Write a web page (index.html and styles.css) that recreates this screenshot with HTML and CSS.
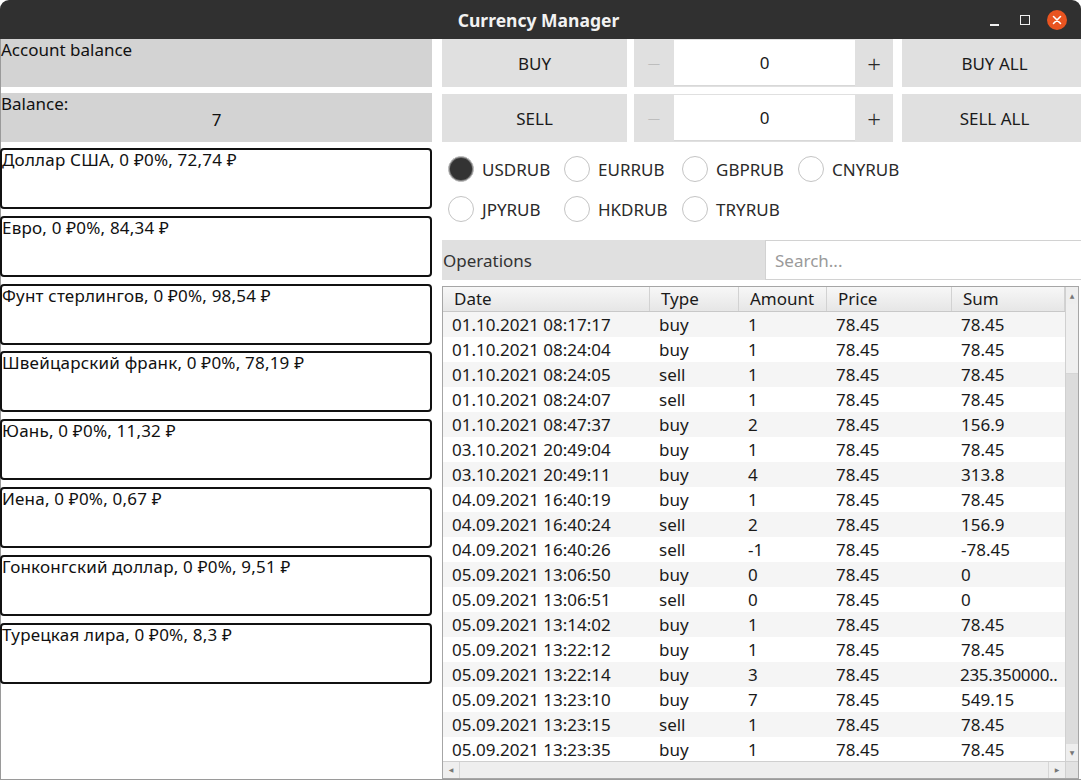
FILE: index.html
```html
<!DOCTYPE html>
<html>
<head>
<meta charset="utf-8">
<link rel="stylesheet" href="styles.css">
</head>
<body>
<div class="window">
  <div class="titlebar">
    <span class="title">Currency Manager</span>
    <div class="controls">
      <span class="ctl-min"></span>
      <span class="ctl-max"></span>
      <span class="ctl-close">
        <svg width="20" height="20" viewBox="0 0 20 20"><circle cx="10" cy="10" r="10" fill="#e95420"/><path d="M6.5 6.5 L13.5 13.5 M13.5 6.5 L6.5 13.5" stroke="#fff" stroke-width="1.6" stroke-linecap="round"/></svg>
      </span>
    </div>
  </div>
  <div class="content">
    <div class="left">
      <div class="graybox">Account balance</div>
      <div class="graybox balance">
        <div>Balance:</div>
        <div class="balance-val">7</div>
      </div>
      <div class="cards">
        <div class="card">Доллар США, 0 ₽0%, 72,74 ₽</div>
        <div class="card">Евро, 0 ₽0%, 84,34 ₽</div>
        <div class="card">Фунт стерлингов, 0 ₽0%, 98,54 ₽</div>
        <div class="card">Швейцарский франк, 0 ₽0%, 78,19 ₽</div>
        <div class="card">Юань, 0 ₽0%, 11,32 ₽</div>
        <div class="card">Иена, 0 ₽0%, 0,67 ₽</div>
        <div class="card">Гонконгский доллар, 0 ₽0%, 9,51 ₽</div>
        <div class="card">Турецкая лира, 0 ₽0%, 8,3 ₽</div>
      </div>
    </div>
    <div class="right">
      <div class="action-row">
        <div class="btn btn-main">BUY</div>
        <div class="spin">
          <div class="spin-btn minus">−</div>
          <div class="spin-val">0</div>
          <div class="spin-btn plus">+</div>
        </div>
        <div class="btn btn-all">BUY ALL</div>
      </div>
      <div class="action-row">
        <div class="btn btn-main">SELL</div>
        <div class="spin">
          <div class="spin-btn minus">−</div>
          <div class="spin-val">0</div>
          <div class="spin-btn plus">+</div>
        </div>
        <div class="btn btn-all">SELL ALL</div>
      </div>
      <div class="radios">
        <label class="radio"><span class="dot checked"></span>USDRUB</label>
        <label class="radio"><span class="dot"></span>EURRUB</label>
        <label class="radio"><span class="dot"></span>GBPRUB</label>
        <label class="radio"><span class="dot"></span>CNYRUB</label>
        <label class="radio"><span class="dot"></span>JPYRUB</label>
        <label class="radio"><span class="dot"></span>HKDRUB</label>
        <label class="radio"><span class="dot"></span>TRYRUB</label>
      </div>
      <div class="ops">
        <div class="ops-label">Operations</div>
        <div class="search">Search...</div>
      </div>
      <div class="table-frame">
        <div class="table-main">
          <div class="table-view">
            <div class="thead">
              <div class="th c-date">Date</div>
              <div class="th c-type">Type</div>
              <div class="th c-amount">Amount</div>
              <div class="th c-price">Price</div>
              <div class="th c-sum">Sum</div>
            </div>
            <div class="tbody">
              <div class="tr"><div class="td c-date">01.10.2021 08:17:17</div><div class="td c-type">buy</div><div class="td c-amount">1</div><div class="td c-price">78.45</div><div class="td c-sum">78.45</div></div>
              <div class="tr"><div class="td c-date">01.10.2021 08:24:04</div><div class="td c-type">buy</div><div class="td c-amount">1</div><div class="td c-price">78.45</div><div class="td c-sum">78.45</div></div>
              <div class="tr"><div class="td c-date">01.10.2021 08:24:05</div><div class="td c-type">sell</div><div class="td c-amount">1</div><div class="td c-price">78.45</div><div class="td c-sum">78.45</div></div>
              <div class="tr"><div class="td c-date">01.10.2021 08:24:07</div><div class="td c-type">sell</div><div class="td c-amount">1</div><div class="td c-price">78.45</div><div class="td c-sum">78.45</div></div>
              <div class="tr"><div class="td c-date">01.10.2021 08:47:37</div><div class="td c-type">buy</div><div class="td c-amount">2</div><div class="td c-price">78.45</div><div class="td c-sum">156.9</div></div>
              <div class="tr"><div class="td c-date">03.10.2021 20:49:04</div><div class="td c-type">buy</div><div class="td c-amount">1</div><div class="td c-price">78.45</div><div class="td c-sum">78.45</div></div>
              <div class="tr"><div class="td c-date">03.10.2021 20:49:11</div><div class="td c-type">buy</div><div class="td c-amount">4</div><div class="td c-price">78.45</div><div class="td c-sum">313.8</div></div>
              <div class="tr"><div class="td c-date">04.09.2021 16:40:19</div><div class="td c-type">buy</div><div class="td c-amount">1</div><div class="td c-price">78.45</div><div class="td c-sum">78.45</div></div>
              <div class="tr"><div class="td c-date">04.09.2021 16:40:24</div><div class="td c-type">sell</div><div class="td c-amount">2</div><div class="td c-price">78.45</div><div class="td c-sum">156.9</div></div>
              <div class="tr"><div class="td c-date">04.09.2021 16:40:26</div><div class="td c-type">sell</div><div class="td c-amount">-1</div><div class="td c-price">78.45</div><div class="td c-sum">-78.45</div></div>
              <div class="tr"><div class="td c-date">05.09.2021 13:06:50</div><div class="td c-type">buy</div><div class="td c-amount">0</div><div class="td c-price">78.45</div><div class="td c-sum">0</div></div>
              <div class="tr"><div class="td c-date">05.09.2021 13:06:51</div><div class="td c-type">sell</div><div class="td c-amount">0</div><div class="td c-price">78.45</div><div class="td c-sum">0</div></div>
              <div class="tr"><div class="td c-date">05.09.2021 13:14:02</div><div class="td c-type">buy</div><div class="td c-amount">1</div><div class="td c-price">78.45</div><div class="td c-sum">78.45</div></div>
              <div class="tr"><div class="td c-date">05.09.2021 13:22:12</div><div class="td c-type">buy</div><div class="td c-amount">1</div><div class="td c-price">78.45</div><div class="td c-sum">78.45</div></div>
              <div class="tr"><div class="td c-date">05.09.2021 13:22:14</div><div class="td c-type">buy</div><div class="td c-amount">3</div><div class="td c-price">78.45</div><div class="td c-sum long">235.350000..</div></div>
              <div class="tr"><div class="td c-date">05.09.2021 13:23:10</div><div class="td c-type">buy</div><div class="td c-amount">7</div><div class="td c-price">78.45</div><div class="td c-sum">549.15</div></div>
              <div class="tr"><div class="td c-date">05.09.2021 13:23:15</div><div class="td c-type">sell</div><div class="td c-amount">1</div><div class="td c-price">78.45</div><div class="td c-sum">78.45</div></div>
              <div class="tr"><div class="td c-date">05.09.2021 13:23:35</div><div class="td c-type">buy</div><div class="td c-amount">1</div><div class="td c-price">78.45</div><div class="td c-sum">78.45</div></div>
            </div>
          </div>
          <div class="vscroll">
            <div class="arrow up">▲</div>
            <div class="vthumb"></div>
            <div class="vtrack"></div>
            <div class="arrow down">▼</div>
          </div>
        </div>
        <div class="hscroll">
          <div class="harrow">◀</div>
          <div class="htrack"></div>
          <div class="harrow">▶</div>
          <div class="corner"></div>
        </div>
      </div>
    </div>
  </div>
</div>
</body>
</html>
```

FILE: styles.css
```css
* { box-sizing: border-box; }
html, body {
  margin: 0;
  padding: 0;
  background: #ffffff;
}
body {
  width: 1081px;
  height: 780px;
  overflow: hidden;
  font-family: "Noto Sans", "DejaVu Sans", sans-serif;
  font-size: 17px;
  color: #1a1a1a;
}
.window {
  width: 1081px;
  height: 780px;
  display: flex;
  flex-direction: column;
  background: #ffffff;
}
.titlebar {
  height: 39px;
  flex: none;
  background: #303030;
  border-radius: 9px 9px 0 0;
  display: flex;
  align-items: center;
  justify-content: center;
  position: relative;
}
.title {
  color: #f2f2f2;
  font-weight: bold;
  font-size: 17.5px;
  margin-left: -4px;
}
.controls {
  position: absolute;
  right: 14px;
  top: 10px;
  display: flex;
  align-items: center;
  gap: 0;
}
.ctl-min {
  width: 9px;
  height: 2px;
  background: #f0f0f0;
  margin-top: 10px;
  margin-right: 21px;
}
.ctl-max {
  width: 10px;
  height: 10px;
  border: 1.5px solid #f0f0f0;
  margin-right: 17px;
}
.ctl-close { width: 20px; height: 20px; display: block; }
.ctl-close svg { display: block; }

.content {
  flex: 1;
  display: flex;
  gap: 10px;
  border-left: 1px solid #9a9a9a;
  border-bottom: 1px solid #9a9a9a;
  min-height: 0;
}
.left {
  width: 431px;
  flex: none;
  display: flex;
  flex-direction: column;
  gap: 6px;
}
.graybox {
  background: #d3d3d3;
  height: 48px;
  line-height: 22px;
  color: #111;
}
.balance { height: 49px; }
.balance-val {
  text-align: center;
  line-height: 20px;
  margin-top: -5px;
}
.cards {
  display: flex;
  flex-direction: column;
  gap: 6.8px;
  margin-top: 0;
}
.card {
  height: 61px;
  border: 2px solid #111;
  border-radius: 4px;
  background: #fff;
  line-height: 19px;
  padding: 0;
  margin-left: -1px;
  color: #111;
  white-space: nowrap;
  letter-spacing: 0.2px;
}

.right {
  flex: 1;
  display: flex;
  flex-direction: column;
  min-width: 0;
}
.action-row {
  display: flex;
  height: 48px;
  margin-bottom: 7px;
}
.btn {
  background: #e0e0e0;
  display: flex;
  align-items: center;
  justify-content: center;
  color: #1a1a1a;
}
.btn-main { width: 185px; }
.btn-all { width: 179px; margin-left: 9px; padding-left: 6px; }
.spin {
  width: 259px;
  margin-left: 7px;
  display: flex;
  background: #e0e0e0;
}
.spin-btn {
  display: flex;
  align-items: center;
  justify-content: center;
  font-size: 24px;
  font-weight: 300;
}
.minus { width: 40px; color: #bdbdbd; }
.plus { width: 38px; color: #2a2a2a; }
.spin-val {
  flex: 1;
  background: #fff;
  margin: 1px 0;
  display: flex;
  align-items: center;
  justify-content: center;
  border-bottom: 1px solid #d8d8d8;
}

.radios {
  display: grid;
  grid-template-columns: 116px 118px 116px auto;
  grid-auto-rows: 40px;
  padding-left: 6px;
}
.radio {
  display: flex;
  align-items: center;
  color: #2a2a2a;
}
.dot {
  width: 26px;
  height: 26px;
  border-radius: 50%;
  border: 1px solid #c4c4c4;
  background: #fff;
  margin-right: 8px;
  flex: none;
}
.dot.checked {
  background: #333333;
  border: 1px solid #c4c4c4;
  box-shadow: inset 0 0 0 1px #777;
}

.ops {
  display: flex;
  height: 40px;
  margin-top: 11px;
}
.ops-label {
  width: 323px;
  background: #e0e0e0;
  display: flex;
  align-items: center;
  padding-left: 1px;
  color: #333;
}
.search {
  flex: 1;
  border: 1px solid #d2d2d2;
  border-right: none;
  display: flex;
  align-items: center;
  padding-left: 9px;
  color: #9a9a9a;
}

.table-frame {
  margin-top: 6px;
  width: 637px;
  flex: 1;
  border: 1px solid #a6a6a6;
  display: flex;
  flex-direction: column;
  min-height: 0;
}
.table-main {
  flex: 1;
  display: flex;
  min-height: 0;
}
.table-view {
  flex: 1;
  overflow: hidden;
  display: flex;
  flex-direction: column;
}
.thead {
  display: flex;
  height: 25px;
  flex: none;
  background: linear-gradient(#f7f7f7, #e6e6e6);
  border-bottom: 1px solid #c8c8c8;
}
.th {
  padding-left: 11px;
  line-height: 24px;
  border-right: 1px solid #d2d2d2;
  color: #1a1a1a;
}
.tbody { flex: 1; overflow: hidden; }
.tr {
  display: flex;
  height: 25px;
}
.tr:nth-child(odd) { background: #f5f5f5; }
.td {
  padding-left: 9px;
  line-height: 25px;
  white-space: nowrap;
  overflow: hidden;
  color: #1a1a1a;
}
.td.long { letter-spacing: -0.3px; padding-left: 8px; }
.c-date { width: 207px; flex: none; }
.c-type { width: 89px; flex: none; }
.c-amount { width: 88px; flex: none; }
.c-price { width: 125px; flex: none; }
.c-sum { width: 113px; flex: none; }
.th.c-sum { flex: 1; }

.vscroll {
  width: 13px;
  flex: none;
  display: flex;
  flex-direction: column;
  border-left: 1px solid #d0d0d0;
  background: #e6e6e6;
}
.arrow {
  height: 17px;
  font-size: 6px;
  color: #777;
  display: flex;
  align-items: center;
  justify-content: center;
  background: #eeeeee;
}
.vthumb { height: 70px; background: #efefef; border-bottom: 1px solid #d6d6d6; }
.vtrack { flex: 1; background: #dcdcdc; }
.hscroll {
  height: 17px;
  display: flex;
  border-top: 1px solid #cfcfcf;
  background: #efefef;
}
.harrow {
  width: 16px;
  font-size: 6px;
  color: #777;
  display: flex;
  align-items: center;
  justify-content: center;
}
.htrack { flex: 1; background: #eeeeee; border-left: 1px solid #d6d6d6; border-right: 1px solid #d6d6d6; }
.corner { width: 13px; background: #e2e2e2; border-left: 1px solid #d0d0d0; }
```
